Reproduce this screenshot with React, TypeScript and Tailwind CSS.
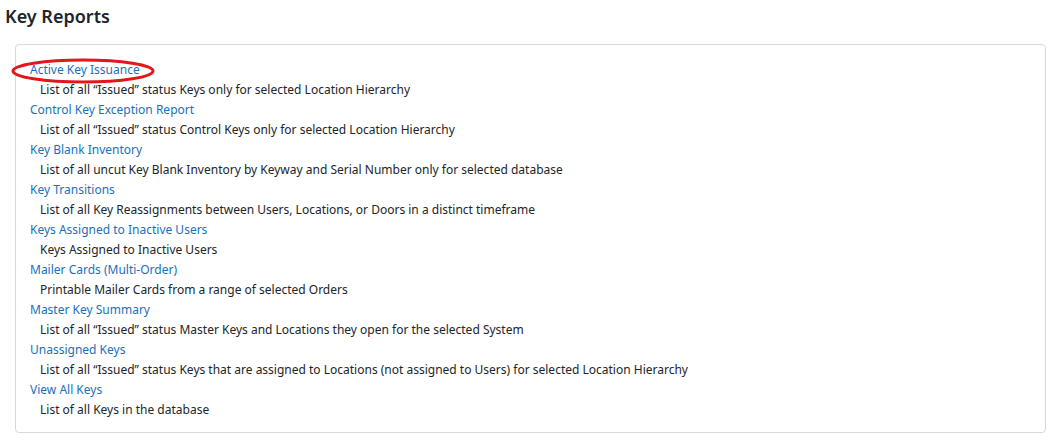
import React from "react";

const reports = [
  { title: "Active Key Issuance", desc: "List of all “Issued” status Keys only for selected Location Hierarchy" },
  { title: "Control Key Exception Report", desc: "List of all “Issued” status Control Keys only for selected Location Hierarchy" },
  { title: "Key Blank Inventory", desc: "List of all uncut Key Blank Inventory by Keyway and Serial Number only for selected database" },
  { title: "Key Transitions", desc: "List of all Key Reassignments between Users, Locations, or Doors in a distinct timeframe" },
  { title: "Keys Assigned to Inactive Users", desc: "Keys Assigned to Inactive Users" },
  { title: "Mailer Cards (Multi-Order)", desc: "Printable Mailer Cards from a range of selected Orders" },
  { title: "Master Key Summary", desc: "List of all “Issued” status Master Keys and Locations they open for the selected System" },
  { title: "Unassigned Keys", desc: "List of all “Issued” status Keys that are assigned to Locations (not assigned to Users) for selected Location Hierarchy" },
  { title: "View All Keys", desc: "List of all Keys in the database" },
];

export default function App() {
  return (
    <div className="min-h-screen bg-white px-[5px] pt-[3px] font-['Noto_Sans',sans-serif] text-[#212529]">
      <h1 className="text-[18px] font-semibold leading-[26px]">Key Reports</h1>
      <div className="relative mt-[15px] ml-[10px] mr-[7px] rounded-[4px] border border-[#d9d9d9] px-[14px] pt-[15px] pb-[12px]">
        {/* red annotation ring around the first report */}
        <svg className="pointer-events-none absolute left-[-5px] top-[13px]" width="144" height="26" viewBox="0 0 144 26">
          <ellipse cx="72" cy="13" rx="70" ry="11" fill="none" stroke="#e3161b" strokeWidth="3" />
        </svg>
        <ul className="text-[12px] leading-[20px]">
          {reports.map((r) => (
            <li key={r.title}>
              <a href="#" className="block text-[#1c6fb8]">
                {r.title}
              </a>
              <p className="pl-[10px]">{r.desc}</p>
            </li>
          ))}
        </ul>
      </div>
    </div>
  );
}
